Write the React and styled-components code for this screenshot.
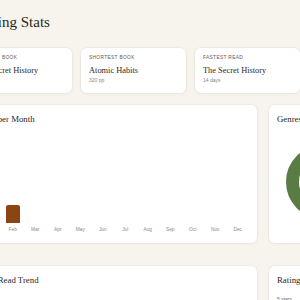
import React from "react";
import styled, { createGlobalStyle } from "styled-components";

const Global = createGlobalStyle`
  html, body { margin: 0; padding: 0; background: #f7f4ee; overflow: hidden; }
  body { font-family: "Liberation Serif", serif; color: #2d2a26; }
`;

const Page = styled.div`
  width: 447px;
  margin-left: -33px;
  padding-top: 13px;
`;

const Title = styled.h1`
  margin: 0;
  font-family: "Liberation Serif", serif;
  font-weight: 400;
  font-size: 15px;
  line-height: 18px;
  color: #2a2723;
`;

const StatGrid = styled.div`
  display: grid;
  grid-template-columns: repeat(4, 1fr);
  gap: 9px;
  margin-top: 17px;
`;

const Card = styled.div`
  background: #fff;
  border-radius: 6px;
  box-shadow: 0 0 0 1px rgba(120, 100, 70, 0.05), 0 1px 4px rgba(120, 100, 70, 0.05);
`;

const StatCard = styled(Card)`
  height: 45px;
  box-sizing: border-box;
  padding: 7px 8px;
`;

const StatLabel = styled.div`
  font-family: "Liberation Sans", sans-serif;
  font-size: 4.8px;
  line-height: 6px;
  letter-spacing: 0.35px;
  text-transform: uppercase;
  color: #5f5a53;
`;

const StatValue = styled.div`
  margin-top: 4px;
  font-size: 8.4px;
  line-height: 11px;
  color: #2d2a26;
`;

const StatSub = styled.div`
  margin-top: 1px;
  font-family: "Liberation Sans", sans-serif;
  font-size: 5px;
  line-height: 7px;
  color: #8a847b;
`;

const ChartGrid = styled.div`
  display: grid;
  grid-template-columns: 2fr 1fr;
  gap: 12px;
  margin-top: ${(p) => p.$top}px;
`;

const ChartCard = styled(Card)`
  height: ${(p) => p.$h}px;
  box-sizing: border-box;
  padding: 8px 8px 10px;
  overflow: hidden;
`;

const CardTitle = styled.h2`
  margin: 0;
  font-family: "Liberation Serif", serif;
  font-weight: 400;
  font-size: 8.8px;
  line-height: 12px;
  color: #2a2723;
`;

const Bars = styled.div`
  display: flex;
  margin-top: 8px;
  padding-left: 4px;
`;

const MonthCol = styled.div`
  flex: 1;
  display: flex;
  flex-direction: column;
  align-items: center;
`;

const BarArea = styled.div`
  height: 90px;
  width: 100%;
  display: flex;
  align-items: flex-end;
  justify-content: center;
`;

const Bar = styled.div`
  width: 60%;
  background: #8b4513;
  border-radius: 2px 2px 0 0;
`;

const MonthLabel = styled.div`
  margin-top: 3px;
  font-family: "Liberation Sans", sans-serif;
  font-size: 4.8px;
  line-height: 7px;
  color: #8f897f;
`;

const DonutBox = styled.div`
  margin-top: 20px;
  padding-left: 9px;
  display: flex;
`;

const RatingRow = styled.div`
  margin-top: 10px;
  font-family: "Liberation Sans", sans-serif;
  font-size: 5px;
  line-height: 7px;
  color: #6d675f;
`;

const stats = [
  { label: "Longest Book", value: "The Secret History", sub: "559 pp" },
  { label: "Shortest Book", value: "Atomic Habits", sub: "320 pp" },
  { label: "Fastest Read", value: "The Secret History", sub: "14 days" },
  { label: "Average Rating", value: "4.5 stars", sub: "2 books" },
];

const months = [
  ["Jan", 0], ["Feb", 18], ["Mar", 0], ["Apr", 0], ["May", 0], ["Jun", 0],
  ["Jul", 0], ["Aug", 0], ["Sep", 0], ["Oct", 0], ["Nov", 0], ["Dec", 0],
];

export default function App() {
  return (
    <>
      <Global />
      <Page>
        <Title>Reading Stats</Title>
        <StatGrid>
          {stats.map((s) => (
            <StatCard key={s.label}>
              <StatLabel>{s.label}</StatLabel>
              <StatValue>{s.value}</StatValue>
              <StatSub>{s.sub}</StatSub>
            </StatCard>
          ))}
        </StatGrid>
        <ChartGrid $top={12}>
          <ChartCard $h={138}>
            <CardTitle>Pages per Month</CardTitle>
            <Bars>
              {months.map(([m, h]) => (
                <MonthCol key={m}>
                  <BarArea>{h > 0 && <Bar style={{ height: h }} />}</BarArea>
                  <MonthLabel>{m}</MonthLabel>
                </MonthCol>
              ))}
            </Bars>
          </ChartCard>
          <ChartCard $h={138}>
            <CardTitle>Genres</CardTitle>
            <DonutBox>
              <svg width="74" height="74" viewBox="0 0 74 74">
                <circle cx="37" cy="37" r="30.5" fill="none" stroke="#5b7b45" strokeWidth="13" />
              </svg>
            </DonutBox>
          </ChartCard>
        </ChartGrid>
        <ChartGrid $top={23}>
          <ChartCard $h={120}>
            <CardTitle>Pages Read Trend</CardTitle>
          </ChartCard>
          <ChartCard $h={120}>
            <CardTitle>Rating Distribution</CardTitle>
            <RatingRow>5 stars</RatingRow>
          </ChartCard>
        </ChartGrid>
      </Page>
    </>
  );
}
